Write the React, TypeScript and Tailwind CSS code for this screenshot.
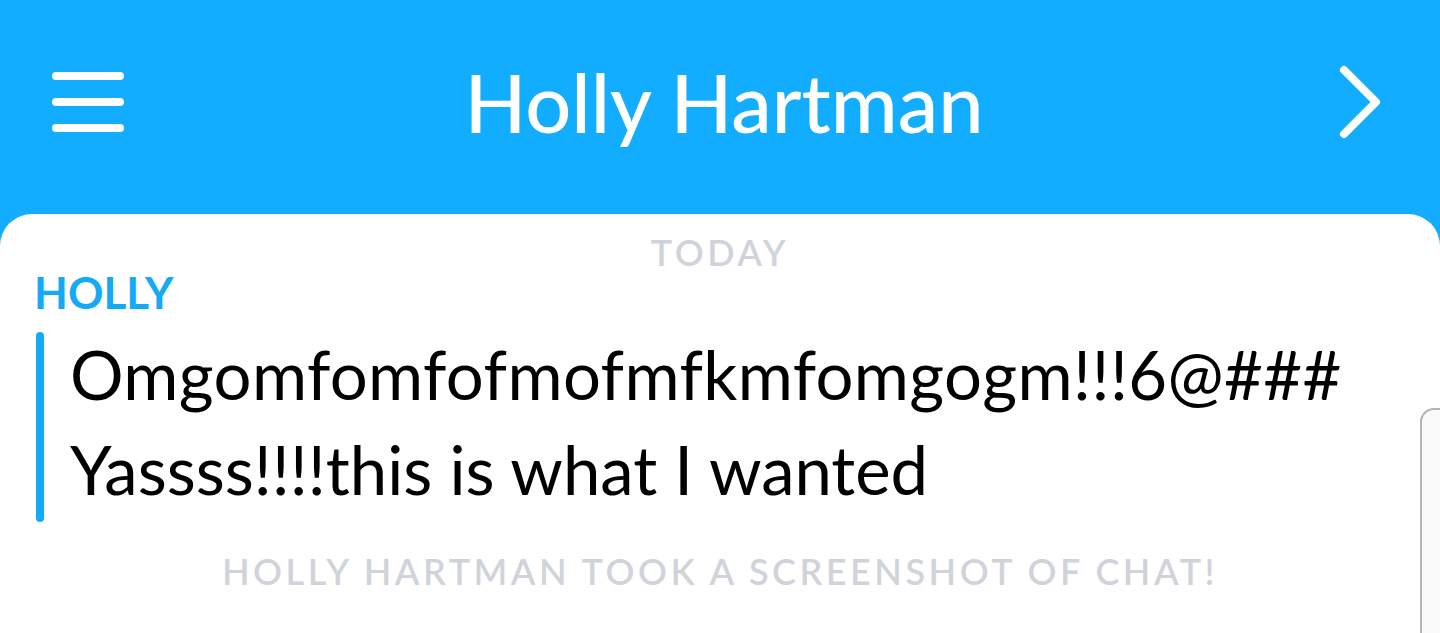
import React from "react";

export default function App() {
  const font = { fontFamily: "Lato, 'Open Sans', sans-serif" };
  return (
    <div className="w-[1440px] h-[633px] overflow-hidden bg-[#12adff] flex flex-col" style={font}>
      <header className="h-[214px] shrink-0 flex items-center justify-between pl-[52px] pr-[56px] pb-[10px]">
        <svg width="72" height="60" viewBox="0 0 72 60" className="shrink-0">
          <g stroke="#fff" strokeWidth="8" strokeLinecap="round">
            <line x1="4" y1="4" x2="68" y2="4" />
            <line x1="4" y1="30" x2="68" y2="30" />
            <line x1="4" y1="56" x2="68" y2="56" />
          </g>
        </svg>
        <h1 className="text-white text-[81px] leading-none font-medium -mt-[2px] mr-[14px]">Holly Hartman</h1>
        <svg width="46" height="76" viewBox="0 0 46 76" className="shrink-0">
          <polyline points="6,6 38,38 6,70" fill="none" stroke="#fff" strokeWidth="8" strokeLinecap="round" strokeLinejoin="round" />
        </svg>
      </header>
      <main className="relative flex-1 bg-white rounded-t-[32px] flex flex-col">
        <div className="text-center text-[#d0d4da] text-[36px] font-semibold tracking-[3.5px] leading-none mt-[20px]">TODAY</div>
        <div className="pl-[34px] text-[#14aaf5] text-[44px] font-bold leading-none">HOLLY</div>
        <div className="flex mt-[18px] ml-[36px]">
          <div className="w-[8px] rounded-full bg-[#14aaf5] shrink-0" />
          <div className="pl-[26px] text-black text-[67px] leading-[95px] -mt-[5px] mb-[5px]">
            <div className="tracking-[0.4px]">Omgomfomfofmofmfkmfomgogm!!!6@###</div>
            <div>Yassss!!!!this is what I wanted</div>
          </div>
        </div>
        <div className="text-center text-[#d0d4da] text-[36px] font-semibold tracking-[3.5px] leading-none mt-[31px]">HOLLY HARTMAN TOOK A SCREENSHOT OF CHAT!</div>
        <div className="absolute left-[1420px] top-[194px] w-[40px] h-[260px] rounded-tl-[14px] border-l-2 border-t-2 border-[#b4b4b4] bg-[#fafafa]" />
      </main>
    </div>
  );
}
